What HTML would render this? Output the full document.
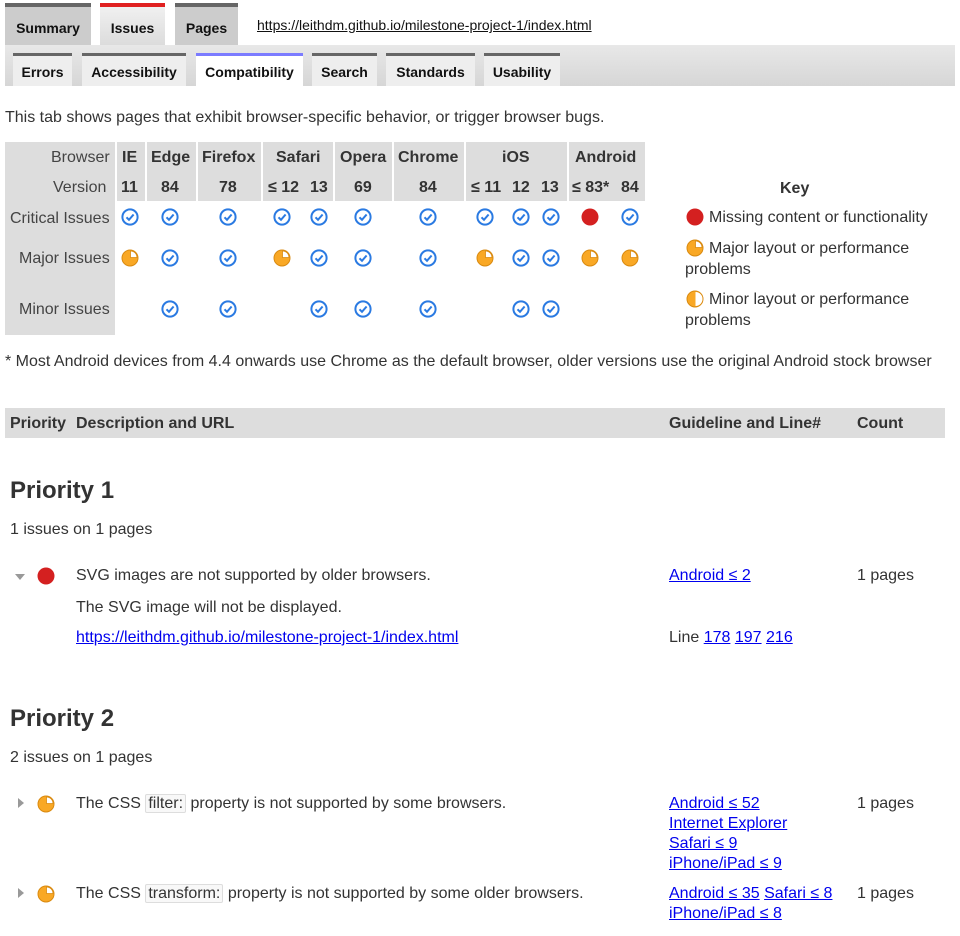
<!DOCTYPE html>
<html><head><meta charset="utf-8"><style>
body{margin:0;width:960px;height:936px;background:#fff;font-family:"Liberation Sans",Arial,sans-serif;font-size:16px;color:#333;position:relative;overflow:hidden}
.a{position:absolute;white-space:nowrap;line-height:20px;margin-top:2px}
.b{font-weight:bold}
a{color:#00e;text-decoration:underline}
.tab{position:absolute;box-sizing:border-box;font-weight:bold;font-size:14px;color:#111;text-align:center}
.g{position:absolute;background:#ddd}
.c{position:absolute;width:18px;height:18px}
.code{border:1px solid #ddd;background:#f8f8f8;padding:0 2px;border-radius:2px}
</style></head><body>
<div class="tab" style="left:5px;top:3px;width:86px;height:42px;background:#ccc;border-top:4px solid #666;line-height:42px">Summary</div>
<div class="tab" style="left:100px;top:3px;width:65px;height:42px;background:linear-gradient(#f0f0f0,#dcdcdc);border-top:4px solid #e02020;line-height:42px">Issues</div>
<div class="tab" style="left:175px;top:3px;width:63px;height:42px;background:#ccc;border-top:4px solid #666;line-height:42px">Pages</div>
<div class="a" style="left:257px;top:13px;font-size:14px"><a style="color:#111">https://leithdm.github.io/milestone-project-1/index.html</a></div>
<div class="g" style="left:5px;top:45px;width:950px;height:41px;background:linear-gradient(#e8e8e8,#d6d6d6)"></div>
<div class="tab" style="left:13px;top:53px;width:59px;height:33px;background:#eee;border-top:3px solid #666;line-height:33px">Errors</div>
<div class="tab" style="left:82px;top:53px;width:104px;height:33px;background:#eee;border-top:3px solid #666;line-height:33px">Accessibility</div>
<div class="tab" style="left:196px;top:53px;width:107px;height:33px;background:#fff;border-top:3px solid #7b7bff;line-height:33px">Compatibility</div>
<div class="tab" style="left:312px;top:53px;width:65px;height:33px;background:#eee;border-top:3px solid #666;line-height:33px">Search</div>
<div class="tab" style="left:386px;top:53px;width:89px;height:33px;background:#eee;border-top:3px solid #666;line-height:33px">Standards</div>
<div class="tab" style="left:484px;top:53px;width:76px;height:33px;background:#eee;border-top:3px solid #666;line-height:33px">Usability</div>

<div class="a" style="left:5px;top:106px">This tab shows pages that exhibit browser-specific behavior, or trigger browser bugs.</div>

<div class="g" style="left:5px;top:142px;width:110px;height:193px"></div>
<div class="g" style="left:117px;top:142px;width:28px;height:59px"></div>
<div class="g" style="left:147px;top:142px;width:49px;height:59px"></div>
<div class="g" style="left:198px;top:142px;width:63px;height:59px"></div>
<div class="g" style="left:263px;top:142px;width:70px;height:59px"></div>
<div class="g" style="left:335px;top:142px;width:57px;height:59px"></div>
<div class="g" style="left:394px;top:142px;width:70px;height:59px"></div>
<div class="g" style="left:466px;top:142px;width:101px;height:59px"></div>
<div class="g" style="left:569px;top:142px;width:76px;height:59px"></div>

<div class="a" style="left:51px;top:146px;color:#444">Browser</div>
<div class="a" style="left:53px;top:176px;color:#444">Version</div>
<div class="a b" style="left:122px;top:146px">IE</div>
<div class="a b" style="left:151px;top:146px">Edge</div>
<div class="a b" style="left:202px;top:146px">Firefox</div>
<div class="a b" style="left:276px;top:146px">Safari</div>
<div class="a b" style="left:340px;top:146px">Opera</div>
<div class="a b" style="left:398px;top:146px">Chrome</div>
<div class="a b" style="left:502px;top:146px">iOS</div>
<div class="a b" style="left:575px;top:146px">Android</div>
<div class="a b" style="left:121px;top:176px">11</div>
<div class="a b" style="left:161px;top:176px">84</div>
<div class="a b" style="left:219px;top:176px">78</div>
<div class="a b" style="left:268px;top:176px">≤ 12</div>
<div class="a b" style="left:310px;top:176px">13</div>
<div class="a b" style="left:354px;top:176px">69</div>
<div class="a b" style="left:419px;top:176px">84</div>
<div class="a b" style="left:471px;top:176px">≤ 11</div>
<div class="a b" style="left:512px;top:176px">12</div>
<div class="a b" style="left:541px;top:176px">13</div>
<div class="a b" style="left:572px;top:176px">≤ 83*</div>
<div class="a b" style="left:621px;top:176px">84</div>
<div class="a" style="left:10px;top:207px;color:#444">Critical Issues</div>
<div class="a" style="left:19px;top:247px;color:#444">Major Issues</div>
<div class="a" style="left:19px;top:298px;color:#444">Minor Issues</div>

<svg width="0" height="0" style="position:absolute"><defs>
<symbol id="ok" viewBox="0 0 18 18"><circle cx="9" cy="9" r="7.6" fill="#fff" stroke="#2a7ae2" stroke-width="2"/><path d="M5.5 9.3 L8 11.8 L12.6 6.5" fill="none" stroke="#2a7ae2" stroke-width="2"/></symbol>
<symbol id="maj" viewBox="0 0 18 18"><circle cx="9" cy="9" r="8" fill="#f9a825" stroke="#d98a10" stroke-width="1"/><path d="M9.5 8.5 V2 A6.5 6.5 0 0 1 16 8.5 Z" fill="#fff" stroke="#d98a10" stroke-width="0.8"/></symbol>
<symbol id="min" viewBox="0 0 18 18"><circle cx="9" cy="9" r="8" fill="#f9a825" stroke="#d98a10" stroke-width="1"/><path d="M9.5 2 A7 7 0 0 1 9.5 16 Z" fill="#fff"/></symbol>
<symbol id="crit" viewBox="0 0 18 18"><circle cx="9" cy="9" r="8.5" fill="#d42020"/></symbol>
</defs></svg>

<svg class="c" style="left:121px;top:208px"><use href="#ok"/></svg>
<svg class="c" style="left:161px;top:208px"><use href="#ok"/></svg>
<svg class="c" style="left:219px;top:208px"><use href="#ok"/></svg>
<svg class="c" style="left:273px;top:208px"><use href="#ok"/></svg>
<svg class="c" style="left:310px;top:208px"><use href="#ok"/></svg>
<svg class="c" style="left:354px;top:208px"><use href="#ok"/></svg>
<svg class="c" style="left:419px;top:208px"><use href="#ok"/></svg>
<svg class="c" style="left:476px;top:208px"><use href="#ok"/></svg>
<svg class="c" style="left:512px;top:208px"><use href="#ok"/></svg>
<svg class="c" style="left:542px;top:208px"><use href="#ok"/></svg>
<svg class="c" style="left:581px;top:208px"><use href="#crit"/></svg>
<svg class="c" style="left:621px;top:208px"><use href="#ok"/></svg>
<svg class="c" style="left:121px;top:249px"><use href="#maj"/></svg>
<svg class="c" style="left:161px;top:249px"><use href="#ok"/></svg>
<svg class="c" style="left:219px;top:249px"><use href="#ok"/></svg>
<svg class="c" style="left:273px;top:249px"><use href="#maj"/></svg>
<svg class="c" style="left:310px;top:249px"><use href="#ok"/></svg>
<svg class="c" style="left:354px;top:249px"><use href="#ok"/></svg>
<svg class="c" style="left:419px;top:249px"><use href="#ok"/></svg>
<svg class="c" style="left:476px;top:249px"><use href="#maj"/></svg>
<svg class="c" style="left:512px;top:249px"><use href="#ok"/></svg>
<svg class="c" style="left:542px;top:249px"><use href="#ok"/></svg>
<svg class="c" style="left:581px;top:249px"><use href="#maj"/></svg>
<svg class="c" style="left:621px;top:249px"><use href="#maj"/></svg>
<svg class="c" style="left:161px;top:300px"><use href="#ok"/></svg>
<svg class="c" style="left:219px;top:300px"><use href="#ok"/></svg>
<svg class="c" style="left:310px;top:300px"><use href="#ok"/></svg>
<svg class="c" style="left:354px;top:300px"><use href="#ok"/></svg>
<svg class="c" style="left:419px;top:300px"><use href="#ok"/></svg>
<svg class="c" style="left:512px;top:300px"><use href="#ok"/></svg>
<svg class="c" style="left:542px;top:300px"><use href="#ok"/></svg>

<div class="a b" style="left:780px;top:177px">Key</div>
<svg class="c" style="left:686px;top:208px"><use href="#crit"/></svg>
<div class="a" style="left:709px;top:206px">Missing content or functionality</div>
<svg class="c" style="left:686px;top:239px"><use href="#maj"/></svg>
<div class="a" style="left:709px;top:237px">Major layout or performance</div>
<div class="a" style="left:685px;top:258px">problems</div>
<svg class="c" style="left:686px;top:290px"><use href="#min"/></svg>
<div class="a" style="left:709px;top:288px">Minor layout or performance</div>
<div class="a" style="left:685px;top:309px">problems</div>

<div class="a" style="left:5px;top:350px">* Most Android devices from 4.4 onwards use Chrome as the default browser, older versions use the original Android stock browser</div>

<div class="g" style="left:5px;top:408px;width:940px;height:30px"></div>
<div class="a b" style="left:10px;top:412px">Priority</div>
<div class="a b" style="left:76px;top:412px">Description and URL</div>
<div class="a b" style="left:669px;top:412px">Guideline and Line#</div>
<div class="a b" style="left:857px;top:412px">Count</div>

<div class="a b" style="left:10px;top:475px;font-size:24px;line-height:28px">Priority 1</div>
<div class="a" style="left:10px;top:518px">1 issues on 1 pages</div>
<svg style="position:absolute;left:14px;top:573px" width="12" height="8"><path d="M1 1 L11 1 L6 7 Z" fill="#999"/></svg>
<svg class="c" style="left:37px;top:567px"><use href="#crit"/></svg>
<div class="a" style="left:76px;top:564px">SVG images are not supported by older browsers.</div>
<div class="a" style="left:76px;top:596px">The SVG image will not be displayed.</div>
<div class="a" style="left:76px;top:626px"><a>https://leithdm.github.io/milestone-project-1/index.html</a></div>
<div class="a" style="left:669px;top:564px"><a>Android ≤ 2</a></div>
<div class="a" style="left:857px;top:564px">1 pages</div>
<div class="a" style="left:669px;top:626px">Line <a>178</a> <a>197</a> <a>216</a></div>

<div class="a b" style="left:10px;top:703px;font-size:24px;line-height:28px">Priority 2</div>
<div class="a" style="left:10px;top:746px">2 issues on 1 pages</div>
<svg style="position:absolute;left:17px;top:797px" width="8" height="12"><path d="M1 1 L7 6 L1 11 Z" fill="#999"/></svg>
<svg class="c" style="left:37px;top:795px"><use href="#maj"/></svg>
<div class="a" style="left:76px;top:792px">The CSS <span class="code">filter:</span> property is not supported by some browsers.</div>
<div class="a" style="left:669px;top:792px"><a>Android ≤ 52</a><br><a>Internet Explorer</a><br><a>Safari ≤ 9</a><br><a>iPhone/iPad ≤ 9</a></div>
<div class="a" style="left:857px;top:792px">1 pages</div>
<svg style="position:absolute;left:17px;top:887px" width="8" height="12"><path d="M1 1 L7 6 L1 11 Z" fill="#999"/></svg>
<svg class="c" style="left:37px;top:885px"><use href="#maj"/></svg>
<div class="a" style="left:76px;top:882px">The CSS <span class="code">transform:</span> property is not supported by some older browsers.</div>
<div class="a" style="left:669px;top:882px"><a>Android ≤ 35</a> <a>Safari ≤ 8</a><br><a>iPhone/iPad ≤ 8</a></div>
<div class="a" style="left:857px;top:882px">1 pages</div>
</body></html>
